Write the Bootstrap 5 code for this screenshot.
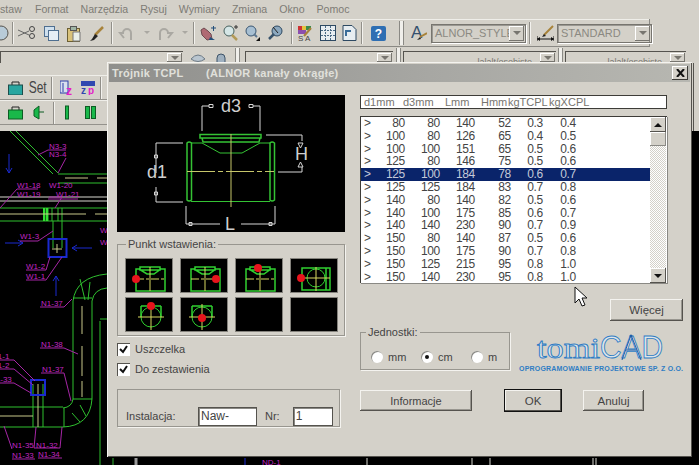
<!DOCTYPE html>
<html lang="en">
<head>
    <meta charset="UTF-8">
    <meta name="viewport" content="width=device-width, initial-scale=1">
    <title>Trójnik TCPL</title>
    <link href="https://cdn.jsdelivr.net/npm/bootstrap@5.3.3/dist/css/bootstrap.min.css" rel="stylesheet">
    <style>
        body { margin: 0; background: #000; font-family: "Liberation Sans", Arial, sans-serif; font-size: 11px; color: #444; }
        .app { width: 699px; height: 465px; overflow: hidden; position: relative; background: #d4d1c9; }

        .menu-strip { height: 19px; gap: 12px; color: #7d7b75; font-size: 10.6px; }
        .tool-strip { height: 28px; width: 649px; margin-bottom: 1px; border-top: 1px solid #efeee9; border-bottom: 1px solid #8a8984; box-shadow: 1px 0 0 #8a8984; }
        .tool-strip svg { display: block; flex: none; }
        .tool-sep { width: 2px; height: 22px; flex: none; border-left: 1px solid #918f89; border-right: 1px solid #f3f2ee; }
        .grip { width: 5px; height: 24px; flex: none; border-left: 1px solid #8a8984; border-right: 1px solid #8a8984; background: #f0efeb; }
        .combo { height: 19px; flex: none; border: 1px solid #77756f; box-shadow: inset 1px 1px 0 #9a9892, 1px 1px 0 #fff; color: #8b8982; font-size: 11px; padding-left: 3px; line-height: 17px; position: relative; white-space: nowrap; }
        .combo-arrow { position: absolute; right: 1px; top: 1px; bottom: 1px; width: 15px; background: #d4d1c9; box-shadow: inset -1px -1px 0 #77756f, inset 1px 1px 0 #fff; display: flex; align-items: center; justify-content: center; }
        .combo-arrow::after { content: ""; border: 4px solid transparent; border-top: 4px solid #77756f; border-bottom: 0; }

        .second-strip { height: 15px; }
        .sunken-field { height: 12px; margin-top: 3px; flex: none; border-top: 1px solid #55534e; border-left: 1px solid #55534e; position: relative; font-size: 9px; color: #77756f; text-align: right; padding: 4px 24px 0 0; line-height: 12px; }
        .second-strip .grip { height: 15px; }
        .second-strip svg { margin-top: 2px; flex: none; }
        .tools-zone { height: 68px; }
        .left-tools { width: 107px; padding-top: 12px; flex: none; }
        .zone-edge { width: 6px; flex: none; border-left: 1px solid #55534e; }
        .left-row { height: 25px; padding-left: 8px; border-top: 1px solid #efeee9; border-bottom: 1px solid #94928c; }
        .left-row svg { display: block; flex: none; }
        .set-label { font-size: 17px; transform: scaleX(.7); color: #444; width: 18px; margin: 0 0 0 3px; }
        .cad-area { height: 335px; background: #000; }
        .cad-area svg { display: block; }

        /* dialog floats over the drawing */
        .win-dialog { position: absolute; left: 107px; top: 62px; width: 585px; height: 395px; background: #d4d1c9; box-shadow: inset 1px 1px 0 #f4f3ef, inset -1px -1px 0 #55534e; padding: 2px 2px 0; }
        .win-title { height: 18px; background: linear-gradient(90deg, #8f8f8c, #a7a7a3 55%, #b7b7b1); color: #e0e0db; font-weight: 700; font-size: 11px; line-height: 18px; padding-left: 3px; position: relative; letter-spacing: .3px; }
        .win-title span:first-child { display: inline-block; width: 94px; }
        .win-close { position: absolute; right: 2px; top: 2px; width: 16px; height: 14px; background: #d4d1c9; box-shadow: inset -1px -1px 0 #3d3c38, inset 1px 1px 0 #fff; display: flex; align-items: center; justify-content: center; }
        .win-body { padding: 13px 7px 0 8px; gap: 15px; }
        .left-col { width: 228px; flex: none; }
        .right-col { width: 323px; flex: none; }

        .preview { height: 137px; background: #000; }
        .preview svg { display: block; }
        .grp { border: 1px solid #98968f; box-shadow: 1px 1px 0 #f4f3ef; margin: 0; padding: 0; min-width: 0; }
        .grp legend { float: none; width: auto; font-size: 11px; line-height: 12px; margin: 0 0 0 8px; padding: 0 2px; color: #444; }
        .point-grp { height: 98px; margin-top: 6px; }
        .point-grid { display: grid; grid-template-columns: repeat(4, 46px); grid-auto-rows: 33px; gap: 6px 9px; padding: 9px 0 0 8px; }
        .thumb { background: #000; box-shadow: 0 0 0 1px #85837d; }
        .thumb svg { display: block; }
        .check-line { height: 12px; gap: 5px; }
        .check-box { width: 13px; height: 13px; background: #fff; box-shadow: inset 1px 1px 0 #55534e; flex: none; }
        .check-box svg { display: block; }
        .inst-grp { height: 38px; margin-top: 14px; width: 223px; border: 1px solid #98968f; box-shadow: 1px 1px 0 #f4f3ef; padding: 17px 0 0 8px; }
        .inst-input { height: 19px; background: #fff; border: 1px solid #55534e; box-shadow: inset 1px 1px 0 #8a8984; font-size: 12px; line-height: 17px; padding-left: 2px; flex: none; }

        .head-box { height: 14px; width: 307px; background: #fff; border: 1px solid #3d3c38; color: #77756f; font-size: 11px; line-height: 12px; padding-left: 3px; white-space: nowrap; }
        .head-box span { display: inline-block; }
        .list-box { height: 167px; width: 307px; margin-top: 7px; background: #fff; border-top: 1px solid #3d3c38; border-left: 1px solid #3d3c38; box-shadow: 1px 1px 0 #8a8984; overflow: hidden; }
        .parts-table { table-layout: fixed; width: 289px; margin: 0; flex: none; --bs-table-bg: transparent; }
        .parts-table td { padding: 0; height: 12.8px; line-height: 12.8px; font-size: 12px; letter-spacing: -.3px; text-align: right; color: #444; border: 0; }
        .parts-table td:nth-child(1) { width: 10px; text-align: left; padding-left: 3px; }
        .parts-table td:nth-child(2) { width: 34px; }
        .parts-table td:nth-child(3) { width: 35px; }
        .parts-table td:nth-child(4) { width: 35px; }
        .parts-table td:nth-child(5) { width: 36px; }
        .parts-table td:nth-child(6) { width: 32px; }
        .parts-table td:nth-child(7) { width: 33px; }
        .parts-table tr.picked td { background: #0a246a; color: #c3c9d8; --bs-table-bg: #0a246a; }
        .scroll-col { width: 16px; flex: none; background: repeating-conic-gradient(#d4d1c9 0 25%, #fff 0 50%) 0 0 / 2px 2px; }
        .scroll-btn { height: 15px; background: #d4d1c9; box-shadow: inset -1px -1px 0 #55534e, inset 1px 1px 0 #fff; display: flex; align-items: center; justify-content: center; flex: none; }
        .scroll-btn::after { content: ""; border: 4px solid transparent; }
        .scroll-btn.up::after { border-bottom: 4px solid #111; border-top: 0; }
        .scroll-btn.down::after { border-top: 4px solid #111; border-bottom: 0; }
        .scroll-thumb { height: 14px; background: #d4d1c9; box-shadow: inset -1px -1px 0 #8a8984, inset 1px 1px 0 #fff; }

        .win-btn { --bs-btn-padding-y: 0; --bs-btn-padding-x: 0; --bs-btn-font-size: 11.5px; --bs-btn-border-width: 0; --bs-btn-border-radius: 0; --bs-btn-color: #444; --bs-btn-bg: #d4d1c9; --bs-btn-line-height: 20px; height: 21px; box-shadow: inset -1px -1px 0 #55534e, inset 1px 1px 0 #f4f3ef, inset -2px -2px 0 #98968f; flex: none; }
        .win-btn.is-default { box-shadow: 0 0 0 1px #111, inset -1px -1px 0 #55534e, inset 1px 1px 0 #f4f3ef; }
        .more-btn { width: 73px; height: 22px; margin: 16px 0 0 250px; display: block; }
        .unit-row { margin-top: 11px; height: 38px; }
        .unit-grp { width: 150px; height: 44px; margin-top: -6px; flex: none; }
        .unit-grp legend { margin-left: 5px; }
        .radio-dot { width: 12px; height: 12px; border-radius: 50%; background: #fff; box-shadow: inset 1px 1px 0 #8a8984; flex: none; display: flex; align-items: center; justify-content: center; }
        .radio-dot.on::after { content: ""; width: 4px; height: 4px; border-radius: 50%; background: #111; }
        .unit-line { padding: 11px 0 0 10px; }
        .unit-item { gap: 5px; width: 50px; flex: none; }
        .brand { width: 170px; margin-left: 3px; flex: none; }
        .brand svg { display: block; overflow: visible; }
        .action-row { margin-top: 20px; }
        .info-btn { width: 112px; --bs-btn-font-size: 11px; }
        .cursor-mark { position: absolute; left: 574px; top: 286px; }
    </style>
</head>
<body>
<div class="app">

    <div class="menu-strip d-flex align-items-center">
        <span style="width:23px">staw</span><span>Format</span><span>Narzędzia</span><span>Rysuj</span><span>Wymiary</span><span>Zmiana</span><span>Okno</span><span>Pomoc</span>
    </div>

    <div class="tool-strip d-flex align-items-center">
        <svg width="9" height="18"><circle cx="1" cy="9" r="7" fill="#b8cbd8" stroke="#55534e"/></svg>
        <div class="tool-sep" style="margin:0 4px 0 3px"></div>
        <svg width="18" height="14" class="me-2"><path d="M0 4l11 5M0 10l11-5" stroke="#666" fill="none"/><circle cx="14" cy="3" r="2.5" fill="none" stroke="#444"/><circle cx="14" cy="10" r="2.5" fill="none" stroke="#444"/></svg>
        <svg width="15" height="15" style="margin-right:7px"><rect x=".5" y=".5" width="10" height="10" fill="#cfe0ee" stroke="#4f6f90"/><rect x="4.5" y="4.5" width="10" height="10" fill="#e6eef5" stroke="#4f6f90"/></svg>
        <svg width="15" height="17" style="margin-right:8px"><rect x="1.5" y="3.5" width="12" height="13" fill="#d9c27a" stroke="#6c5f33"/><rect x="4.5" y="1.5" width="6" height="4" fill="#9fb5a5" stroke="#555"/><path d="M7 7h7v9H7z" fill="#eaf0ea" stroke="#777"/></svg>
        <svg width="15" height="15" style="margin-right:7px"><path d="M14 1L6 9" stroke="#a8833a" stroke-width="2.5"/><path d="M6 8l3 2-4 4-4 1 2-2z" fill="#222"/></svg>
        <div class="tool-sep"></div>
        <svg width="16" height="16" style="margin:0 10px 0 5px"><path d="M13 15V8a4 4 0 0 0-8 0H2l4 5" fill="none" stroke="#aaa8a2" stroke-width="2"/></svg>
        <svg width="6" height="4" style="margin-right:7px"><path d="M0 0h6L3 3z" fill="#aaa8a2"/></svg>
        <svg width="17" height="16" style="margin-right:8px"><path d="M3 15V8a4 4 0 0 1 8 0h4l-4 5" fill="none" stroke="#aaa8a2" stroke-width="2"/></svg>
        <svg width="6" height="4" style="margin-right:5px"><path d="M0 0h6L3 3z" fill="#aaa8a2"/></svg>
        <div class="tool-sep"></div>
        <svg width="17" height="16" style="margin:0 6px 0 5px"><path d="M1 5l3-2 4 3 3 3 1 5-5 1-5-5z" fill="#b06a74" stroke="#6d4a50"/><path d="M11 3h5M13.500 1v5" stroke="#234f7a"/><path d="M10 12l5 3H9z" fill="#234f7a"/></svg>
        <svg width="15" height="16" style="margin-right:7px"><circle cx="6" cy="6" r="5" fill="#d5e6e6" stroke="#47605e"/><path d="M9 10l5 5" stroke="#b29a58" stroke-width="2.500"/><path d="M11 2h4M13 0v4" stroke="#333"/></svg>
        <svg width="15" height="16" style="margin-right:8px"><circle cx="6" cy="6" r="5" fill="#a7bfd2" stroke="#3a5672"/><path d="M9 9l3 3" stroke="#5c7690" stroke-width="2"/><path d="M15 12v4h-4z" fill="#111"/></svg>
        <svg width="16" height="16" style="margin-right:7px"><circle cx="9" cy="6" r="5" fill="#8ba7be" stroke="#2d4962"/><path d="M6 9l-5 5" stroke="#38536c" stroke-width="2.500"/><path d="M5 2l5 6" stroke="#222"/></svg>
        <div class="tool-sep"></div>
        <svg width="15" height="16" style="margin:0 7px 0 5px"><rect x="0" y="1" width="4" height="4" fill="#c33"/><rect x="4" y="1" width="4" height="4" fill="#e6c23c"/><rect x="8" y="1" width="5" height="4" fill="#3c8a4a"/><rect x="0" y="5" width="8" height="4" fill="#8c4fb0"/><path d="M13 3L6 11" stroke="#a8833a" stroke-width="2"/><text x="0" y="16" font-size="8" fill="#444" font-family="Liberation Sans">S A</text></svg>
        <svg width="16" height="16" style="margin-right:6px"><rect x=".5" y=".5" width="15" height="15" fill="#e7edf1" stroke="#2d4962"/><path d="M5.500 1v14M10.500 1v14M1 5.500h14M1 10.500h14" stroke="#4a6a85" stroke-dasharray="2 1"/></svg>
        <svg width="16" height="16" style="margin-right:3px"><path d="M1 .5h9l4 4v11H1z" fill="#e7edf1" stroke="#2d4962"/><path d="M4 11V6h5" fill="none" stroke="#3a6c98" stroke-width="2"/></svg>
        <div class="tool-sep" style="margin-right:8px"></div>
        <svg width="15" height="15" style="margin-right:13px"><rect width="15" height="15" rx="2" fill="#2f6fb3"/><text x="7.500" y="12" text-anchor="middle" font-size="12" font-weight="700" fill="#fff" font-family="Liberation Sans">?</text></svg>
        <div class="grip" style="margin-right:7px"></div>
        <svg width="16" height="18" style="margin-right:4px"><text x="0" y="14" font-size="17" fill="#35506e" font-family="Liberation Sans">A</text><path d="M16 9l-7 4" stroke="#a8833a" stroke-width="2"/><path d="M9 13l-3 3 4-1z" fill="#222"/></svg>
        <div class="combo" style="width:95px">ALNOR_STYLE<span class="combo-arrow"></span></div>
        <div class="tool-sep" style="margin:0 6px 0 3px"></div>
        <svg width="17" height="16" style="margin-right:3px"><path d="M0 14h17M0 11v6M17 11v6" stroke="#111"/><path d="M0 14l3-2v4zM17 14l-3-2v4z" fill="#111"/><path d="M16 1L7 10" stroke="#a8833a" stroke-width="2"/><path d="M7 9l2 2-4 1z" fill="#222"/></svg>
        <div class="combo" style="width:95px">STANDARD<span class="combo-arrow"></span></div>
    </div>

    <div class="second-strip d-flex">
        <div class="sunken-field" style="width:183px;margin-right:7px"><span class="combo-arrow"></span></div>
        <svg width="16" height="15" style="margin-right:9px"><path d="M1 9q7-8 14 0q-7 5-14 0z" fill="#b9c5cf" stroke="#6d7a85"/></svg>
        <svg width="12" height="15" style="margin-right:8px"><path d="M2 14V8a4 4 0 0 1 8 0v6" fill="#9fb0bf" stroke="#3d5368"/></svg>
        <div class="grip" style="margin-right:5px"></div>
        <div class="sunken-field" style="width:148px;margin-right:3px"><span class="combo-arrow"></span></div>
        <div class="grip" style="margin-right:2px"></div>
        <div class="sunken-field" style="width:153px;margin-right:2px">lalalt/osobiste<span class="combo-arrow"></span></div>
        <div class="grip" style="margin-right:2px"></div>
        <div class="sunken-field" style="width:121px">lalalt/osobiste<span class="combo-arrow"></span></div>
    </div>

    <div class="tools-zone d-flex justify-content-between">
        <div class="left-tools">
            <div class="left-row d-flex align-items-center">
                <svg width="15" height="15"><path d="M4 5V2h7v3" fill="none" stroke="#222"/><rect x=".5" y="5" width="14" height="10" fill="#29a6a0" stroke="#1d4d4a"/></svg>
                <span class="set-label">Set</span>
                <div class="tool-sep" style="margin:0 7px 0 7px"></div>
                <svg width="14" height="15"><rect x="0" y="1" width="8" height="12" fill="#d8dfee" stroke="#2a3fa8"/><path d="M3 3v9" stroke="#2a3fa8"/><text x="6" y="15" font-size="12" font-weight="700" fill="#e21fc8" font-family="Liberation Sans">z</text></svg>
                <svg width="15" height="15" style="margin-left:7px"><rect x="0" y="1" width="14" height="5" fill="#3048b0"/><text x="0" y="14" font-size="10" font-weight="700" fill="#3048b0" font-family="Liberation Sans">z</text><text x="7" y="14" font-size="10" font-weight="700" fill="#e21fc8" font-family="Liberation Sans">p</text></svg>
                <div class="tool-sep ms-1"></div>
            </div>
            <div class="left-row d-flex align-items-center">
                <svg width="15" height="15"><path d="M4 5V2h7v3" fill="none" stroke="#222"/><rect x=".5" y="5" width="14" height="9" fill="#19b84a" stroke="#0c5d23"/></svg>
                <svg width="11" height="15" style="margin:0 9px 0 10px"><path d="M6 1L1 5v6l5 3zM6 7h5" fill="#19b84a" stroke="#0c5d23"/></svg>
                <div class="tool-sep"></div>
                <svg width="4" height="15" style="margin:0 16px 0 10px"><rect x=".5" y="1" width="3" height="13" fill="#19b84a" stroke="#0c5d23"/></svg>
                <svg width="11" height="13"><rect x=".5" y=".5" width="4" height="12" fill="#19b84a" stroke="#0c5d23"/><rect x="6.500" y=".5" width="4" height="12" fill="#19b84a" stroke="#0c5d23"/></svg>
            </div>
        </div>
        <div class="zone-edge"></div>
    </div>

    <div class="cad-area">
        <svg width="699" height="335" viewBox="0 130 699 335" font-family="Liberation Sans" font-size="8" fill="#c026c0">
            <g fill="none" stroke="#d8d8d0"><path d="M0 196H107M0 200H107"/></g>
            <g fill="none" stroke="#2fc02f">
                <path d="M0 207H107M0 220H107"/>
                <path d="M10 130L53 173M16 130L58 172M58 173H107M58 182H107"/>
                <path d="M53 220V247M62 220V247M45 207V220M48 207V220M52 207V220M58 207V220M62 207V220"/>
                <path d="M73 300V398M92 300V398M73 300Q76 276 107 273M92 300Q94 288 107 287M73 297H92M73 398H92M80 278L85 299M90 281L88 299"/>
                <path d="M92 398Q90 425 63 426M73 398Q72 406 63 407M64 407V426M80 404L86 415M72 412L80 421"/>
                <path d="M0 406H63M0 426H63M33 383V426M43 383V426"/>
                <path d="M100 320V465M107 318H100"/>
            </g>
            <g fill="none" stroke="#33e033" stroke-width="2"><path d="M44 207V220M47 207V220"/></g>
            <g fill="none" stroke="#c8c88a"><path d="M0 213H86M95 213H107M65 177H88M97 177H107M82 305V333M82 345V375M82 380V396M0 415H33M38 383V426M57 243V252M52 248H62"/></g>
            <g fill="none" stroke="#1a2ad0" stroke-width="2"><path d="M48.500 238H66.500V256H48.500ZM31 379H45V394H31Z"/></g>
            <g fill="none" stroke="#1a2ad0"><path d="M9 153V172M6 167L9 172L12 167M5 242H23M18 239L23 242L18 245M72 247H92M77 244L72 247L77 250M56 275V295M53 280L56 275L59 280"/></g>
            <g fill="none" stroke="#a626a6"><path d="M38 154L48 149H66M66 157L58 172M0 207L17 188H38M49 196H62L55 207M48 198H78M20 240H38L53 230M26 269H46L50 256M26 279H46L62 256M40 306H64L72 298M40 347H64L78 353M41 372H64L71 400M-5 359H14L35 380M-5 368H14L33 384M-5 382H14L31 392M4 425L12 448M36 426L34 447H60L62 426M12 458H35M38 457H62"/></g>
            <text x="49" y="148">N3-3</text><text x="49" y="156">N3-4</text>
            <text x="17" y="187">W1-18</text><text x="17" y="196">W1-19</text>
            <text x="49" y="187">W1-20</text><text x="56" y="196">W1-21</text>
            <text x="20" y="238">W1-3</text><text x="26" y="268">W1-2</text><text x="26" y="278">W1-1</text>
            <text x="41" y="305">N1-37</text><text x="41" y="346">N1-38</text><text x="42" y="371">N1-37</text>
            <text x="-8" y="358">N1-1</text><text x="-8" y="367">N1-2</text><text x="-10" y="381">N1-33</text>
            <text x="12" y="447">N1-35</text><text x="36" y="447">N1-32</text><text x="12" y="457">N1-33</text><text x="38" y="456">N1-34</text>
            <text x="100" y="232">W</text><text x="100" y="244">W</text>
            <text x="262" y="464">ND-1</text>
            <g fill="none" stroke-width="1"><path d="M113 457V465" stroke="#2fb52f"/><path d="M136 457V465" stroke="#9a9a9a" stroke-width="3"/><path d="M245 457V465" stroke="#1a2ad0"/><path d="M367 457V465M472 457V465M490 457V465M593 457V465M596 457V465" stroke="#d8d8d0"/></g>
        </svg>
    </div>

    <div class="win-dialog">
        <div class="win-title"><span>Trójnik TCPL</span><span>(ALNOR kanały okrągłe)</span>
            <div class="win-close"><svg width="9" height="8"><path d="M1 0l7 8M8 0L1 8" stroke="#111" stroke-width="2"/></svg></div>
        </div>
        <div class="win-body d-flex">
            <div class="left-col">
                <div class="preview">
                    <svg width="228" height="137" font-family="Liberation Sans" fill="none">
                        <g stroke="#d6d6d6">
                            <path d="M85 36V11H92M143 36V11H136"/><path d="M92 9.500h4v3h-4zM136 9.500h-4v3h4z"/>
                            <path d="M66 48H39V78M66 107H39V92M37.500 60h3v3h-3zM37.500 97h3v3h-3z"/>
                            <path d="M149 40H185V46M161 77H185V72M69 111V129H103M158 111V129H124M72 127.500h3v3h-3zM152 127.500h3v3h-3z"/>
                            <path d="M181 48h5l-2.500 5zM181 72h5l-2.500-5z"/>
                        </g>
                        <g fill="#cfcfcf" font-size="18">
                            <text x="104" y="17">d3</text><text x="30" y="83">d1</text><text x="178" y="65">H</text><text x="108" y="135">L</text>
                        </g>
                        <g stroke="#34c334">
                            <path d="M70 48Q72 46 74.500 48V105Q72 107 70 105ZM153 48Q155 46 157.500 48V105Q155 107 153 105Z" stroke-width="1.500"/>
                            <path d="M74 48H85L103 58H125L143 48H153M74 106.500H153"/>
                            <path d="M83 39.500H144V43H83ZM85 43L86 47H142L143 43" stroke-width="1.500"/>
                        </g>
                        <path d="M114 39V112" stroke="#c6c66a"/>
                        <path d="M70 76.500H157" stroke="#c6c66a" stroke-dasharray="28 3 5 3"/>
                    </svg>
                </div>
                <fieldset class="grp point-grp">
                    <legend>Punkt wstawienia:</legend>
                    <div class="point-grid">
                        <div class="thumb"><svg width="46" height="33"><use href="#tee-side"/><circle cx="10" cy="20" r="4" fill="#e8141c"/></svg></div>
                        <div class="thumb"><svg width="46" height="33"><use href="#tee-side"/><circle cx="35" cy="20" r="4" fill="#e8141c"/></svg></div>
                        <div class="thumb"><svg width="46" height="33"><use href="#tee-side"/><circle cx="22" cy="9" r="4" fill="#e8141c"/></svg></div>
                        <div class="thumb"><svg width="46" height="33"><use href="#tee-top"/><circle cx="10" cy="19" r="4" fill="#e8141c"/></svg></div>
                        <div class="thumb"><svg width="46" height="33"><use href="#tee-round" x="2"/><circle cx="25" cy="8" r="4" fill="#e8141c"/></svg></div>
                        <div class="thumb"><svg width="46" height="33"><use href="#tee-round" x="-2"/><circle cx="21" cy="20" r="4" fill="#e8141c"/></svg></div>
                        <div class="thumb"></div>
                        <div class="thumb"></div>
                    </div>
                </fieldset>
                <div class="check-line d-flex align-items-center" style="margin-top:7px"><span class="check-box"><svg width="13" height="13"><path d="M3 6l3 3 4-6" fill="none" stroke="#111" stroke-width="2"/></svg></span>Uszczelka</div>
                <div class="check-line d-flex align-items-center" style="margin-top:8px"><span class="check-box"><svg width="13" height="13"><path d="M3 6l3 3 4-6" fill="none" stroke="#111" stroke-width="2"/></svg></span>Do zestawienia</div>
                <div class="inst-grp d-flex align-items-center">
                    <span style="width:72px">Instalacja:</span>
                    <div class="inst-input" style="width:59px">Naw-</div>
                    <span style="margin:0 13px 0 8px">Nr:</span>
                    <div class="inst-input" style="width:40px">1</div>
                </div>
            </div>
            <div class="right-col">
                <div class="head-box"><span style="width:39px">d1mm</span><span style="width:42px">d3mm</span><span style="width:36px">Lmm</span><span style="width:27px">Hmm</span><span style="width:41px">kgTCPL</span><span>kgXCPL</span></div>
                <div class="list-box d-flex">
                    <table class="table table-borderless parts-table">
                        <tbody>
                            <tr><td>&gt;</td><td>80</td><td>80</td><td>140</td><td>52</td><td>0.3</td><td>0.4</td><td></td></tr>
                            <tr><td>&gt;</td><td>100</td><td>80</td><td>126</td><td>65</td><td>0.4</td><td>0.5</td><td></td></tr>
                            <tr><td>&gt;</td><td>100</td><td>100</td><td>151</td><td>65</td><td>0.5</td><td>0.6</td><td></td></tr>
                            <tr><td>&gt;</td><td>125</td><td>80</td><td>146</td><td>75</td><td>0.5</td><td>0.6</td><td></td></tr>
                            <tr class="picked"><td>&gt;</td><td>125</td><td>100</td><td>184</td><td>78</td><td>0.6</td><td>0.7</td><td></td></tr>
                            <tr><td>&gt;</td><td>125</td><td>125</td><td>184</td><td>83</td><td>0.7</td><td>0.8</td><td></td></tr>
                            <tr><td>&gt;</td><td>140</td><td>80</td><td>140</td><td>82</td><td>0.5</td><td>0.6</td><td></td></tr>
                            <tr><td>&gt;</td><td>140</td><td>100</td><td>175</td><td>85</td><td>0.6</td><td>0.7</td><td></td></tr>
                            <tr><td>&gt;</td><td>140</td><td>140</td><td>230</td><td>90</td><td>0.7</td><td>0.9</td><td></td></tr>
                            <tr><td>&gt;</td><td>150</td><td>80</td><td>140</td><td>87</td><td>0.5</td><td>0.6</td><td></td></tr>
                            <tr><td>&gt;</td><td>150</td><td>100</td><td>175</td><td>90</td><td>0.7</td><td>0.8</td><td></td></tr>
                            <tr><td>&gt;</td><td>150</td><td>125</td><td>215</td><td>95</td><td>0.8</td><td>1.0</td><td></td></tr>
                            <tr><td>&gt;</td><td>150</td><td>140</td><td>230</td><td>95</td><td>0.8</td><td>1.0</td><td></td></tr>
                        </tbody>
                    </table>
                    <div class="scroll-col d-flex flex-column">
                        <div class="scroll-btn up"></div>
                        <div class="scroll-thumb"></div>
                        <div class="flex-grow-1"></div>
                        <div class="scroll-btn down"></div>
                    </div>
                </div>
                <button type="button" class="btn win-btn more-btn">Więcej</button>
                <div class="unit-row d-flex">
                    <fieldset class="grp unit-grp">
                        <legend>Jednostki:</legend>
                        <div class="unit-line d-flex">
                            <div class="unit-item d-flex align-items-center"><span class="radio-dot"></span>mm</div>
                            <div class="unit-item d-flex align-items-center"><span class="radio-dot on"></span>cm</div>
                            <div class="unit-item d-flex align-items-center"><span class="radio-dot"></span>m</div>
                        </div>
                    </fieldset>
                    <div class="brand">
                        <svg width="170" height="42" fill="none">
                            <text x="24" y="26" font-family="Liberation Serif" font-size="30" stroke="#2f7dc4" stroke-width=".9" fill="#dfe5e8" textLength="63" lengthAdjust="spacingAndGlyphs">tomi</text>
                            <text x="87" y="26" font-family="Liberation Sans" font-size="31" stroke="#2f7dc4" stroke-width=".9" fill="#dfe5e8" textLength="63" lengthAdjust="spacingAndGlyphs">CAD</text>
                            <path d="M118 3L109 28M118 3L128 28M113 18H124" stroke="#1f5ea8"/>
                            <circle cx="118" cy="4" r="1.500" fill="#1f5ea8"/>
                            <text x="6" y="39" font-family="Liberation Sans" font-size="7" font-weight="700" fill="#2f7dc4" textLength="164">OPROGRAMOWANIE PROJEKTOWE SP. Z O.O.</text>
                        </svg>
                    </div>
                </div>
                <div class="action-row d-flex">
                    <button type="button" class="btn win-btn info-btn">Informacje</button>
                    <button type="button" class="btn win-btn is-default" style="width:56px;margin-left:33px">OK</button>
                    <button type="button" class="btn win-btn" style="width:61px;margin-left:22px">Anuluj</button>
                </div>
            </div>
        </div>
    </div>

    <svg class="cursor-mark" width="14" height="22"><path d="M1 1V17L5 13L8 20L11 19L8 12H13Z" fill="#fff" stroke="#111"/></svg>

    <svg width="0" height="0" class="position-absolute">
        <defs>
            <g id="tee-side" fill="none">
                <path d="M10 10H13L21 15H28L35 10H39V32H10ZM14 8H34V11H14Z" stroke="#30d030" stroke-width="1.500"/>
                <path d="M10 20H39" stroke="#d8d860" stroke-dasharray="8 2 3 2"/>
                <path d="M24 8V32" stroke="#d8d860"/>
            </g>
            <g id="tee-top" fill="none">
                <path d="M11 9H39V31H11ZM35 9V31" stroke="#30d030" stroke-width="1.500"/>
                <circle cx="25" cy="19" r="9" stroke="#30d030"/>
                <path d="M10 19H39M25 8V32" stroke="#d8d860"/>
            </g>
            <g id="tee-round" fill="none">
                <path d="M13 8H33M13 8V19M33 8V19" stroke="#30d030" stroke-width="1.500"/>
                <circle cx="23" cy="19" r="10" stroke="#30d030"/>
                <path d="M10 19H36M23 6V32" stroke="#d8d860"/>
            </g>
        </defs>
    </svg>

</div>
<script src="https://cdn.jsdelivr.net/npm/bootstrap@5.3.3/dist/js/bootstrap.bundle.min.js"></script>
</body>
</html>
